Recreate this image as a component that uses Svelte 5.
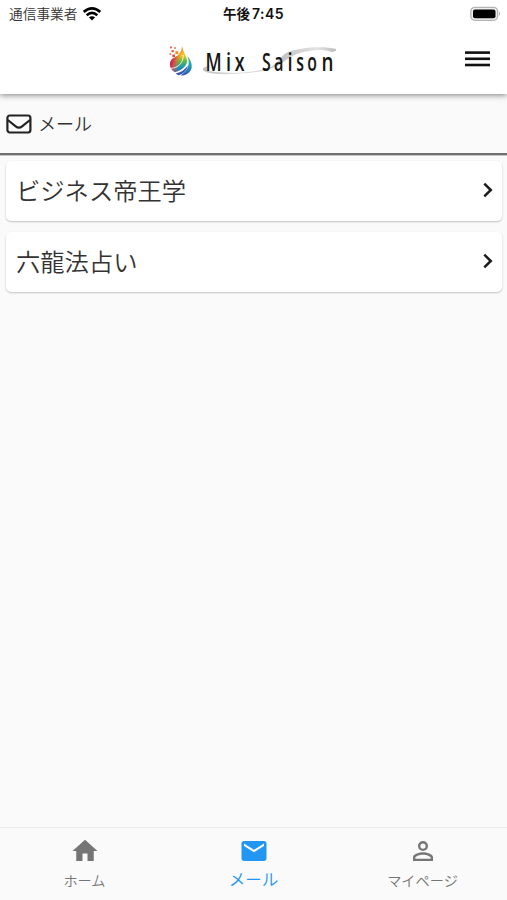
<script>
  const mails = ['ビジネス帝王学', '六龍法占い'];
  const tabs = [
    { id: 'home', label: 'ホーム' },
    { id: 'mail', label: 'メール' },
    { id: 'person', label: 'マイページ' }
  ];
  const active = 'mail';
  // x position, horizontal scale and glyph of each logo letter
  const letters = [
    [205.6, 0.69, 'M'], [225.9, 0.72, 'i'], [234.8, 0.7, 'x'],
    [262, 0.62, 'S'], [274, 0.64, 'a'], [287.4, 0.72, 'i'],
    [296.3, 0.62, 's'], [307.3, 0.62, 'o'], [321.4, 0.74, 'n']
  ];
</script>

<div class="screen">
  <header>
    <div class="status">
      <div class="carrier">
        <span>通信事業者</span>
        <svg width="20" height="14" viewBox="0 0 20 14" fill="none" stroke="#000" stroke-width="2.7">
          <path d="M1.7 4.9Q10-2.1 18.3 4.9" />
          <path d="M4.7 8.2Q10 3.7 15.3 8.2" />
          <path d="M10 13.5 6.9 10.3Q10 8 13.1 10.3Z" fill="#000" stroke="none" />
        </svg>
      </div>
      <span class="time">午後<b>7:45</b></span>
      <svg class="battery" width="31" height="16" viewBox="0 0 31 16">
        <rect x="0.8" y="1.3" width="26.8" height="13" rx="4" fill="#eee" stroke="#b4b4b4" stroke-width="1.3" />
        <rect x="3" y="3.4" width="22.5" height="8.8" rx="2" fill="#000" />
        <path d="M29 5.5Q31 7.8 29 10Z" fill="#aaa" />
      </svg>
    </div>
    <div class="brand">
      <svg class="logo" width="180" height="40" viewBox="162 38 180 40">
        <defs>
          <linearGradient id="flame" x1="179" y1="46" x2="181" y2="74" gradientUnits="userSpaceOnUse">
            <stop offset="0" stop-color="#f58a1f" />
            <stop offset=".3" stop-color="#f6c821" />
            <stop offset=".52" stop-color="#5cb947" />
            <stop offset=".75" stop-color="#158fc4" />
            <stop offset="1" stop-color="#3a3fa0" />
          </linearGradient>
          <linearGradient id="edge" x1="169" y1="60" x2="180" y2="63" gradientUnits="userSpaceOnUse">
            <stop offset="0" stop-color="#b01e86" />
            <stop offset=".35" stop-color="#e5304a" />
            <stop offset="1" stop-color="#f08a20" stop-opacity="0" />
          </linearGradient>
          <linearGradient id="crescent" x1="188" y1="54" x2="182" y2="74" gradientUnits="userSpaceOnUse">
            <stop offset="0" stop-color="#8dc63f" />
            <stop offset=".4" stop-color="#1fa8b8" />
            <stop offset="1" stop-color="#2b4fb0" />
          </linearGradient>
          <linearGradient id="swoosh" x1="200" x2="338" y1="0" y2="0" gradientUnits="userSpaceOnUse">
            <stop offset="0" stop-color="#bbb" />
            <stop offset=".3" stop-color="#e6e6e6" />
            <stop offset=".6" stop-color="#c4c4c4" />
            <stop offset=".85" stop-color="#e2e2e2" />
            <stop offset="1" stop-color="#b8b8b8" />
          </linearGradient>
        </defs>
        <path fill="url(#swoosh)" d="M211 64.5C196 67 202 73.5 226 73.3C250 73 270 70 281 63C291 55 300 49.3 322 49.1Q328 49.5 332 51.3Q338 49.5 335.5 47.8C323 44.5 298 46.5 287 51.5C280 55 279 62 269 67C254 72 226 73 211 70.3Q202 68 211 64.5Z" />
        <path fill="url(#flame)" d="M182 45.2C183 50 185 53 186.3 56.5C189 63 184 68.5 175 71.3C170 68.5 168 62 172.3 57.8C177 55.5 182 52 182 45.2Z" />
        <path fill="url(#edge)" d="M182 45.2C183 50 185 53 186.3 56.5C189 63 184 68.5 175 71.3C170 68.5 168 62 172.3 57.8C177 55.5 182 52 182 45.2Z" />
        <path fill="none" stroke="#fff" stroke-width=".8" d="M171 67.3C178 67 183.5 62 183.2 54" />
        <path fill="url(#crescent)" d="M187.3 55C193 61 194 70 186 73.5Q183 75 180.8 74.3C188 70 190.5 63 187.3 55Z" />
        <path fill="#3554b4" d="M187.8 64.5C187 69.5 183.5 72.5 179 74.2Q176.8 73.8 175.7 72.5Q184 70.5 187.8 64.5Z" />
        <g fill="#ef633c">
          <rect x="170" y="45.5" width="1.9" height="1.9" />
          <rect x="174.2" y="46.2" width="1.6" height="1.6" />
          <rect x="171.5" y="49" width="2.3" height="2.3" />
          <rect x="175.4" y="50.2" width="2.8" height="2.8" fill="#f18a22" />
          <rect x="169.5" y="52.3" width="1.6" height="1.6" />
          <rect x="172.4" y="53.5" width="2.6" height="2.6" fill="#e74545" />
        </g>
        {#each letters as [x, s, ch]}
          <text transform={`translate(${x} 70) scale(${s} 1)`}>{ch}</text>
        {/each}
      </svg>
      <svg class="menu" width="25" height="16" viewBox="0 0 25 16" fill="#111">
        <rect width="25" height="2.6" y=".3" /><rect width="25" height="2.6" y="6.5" /><rect width="25" height="2.6" y="12.7" />
      </svg>
    </div>
  </header>

  <div class="heading">
    <svg width="26" height="20" viewBox="0 0 26 20" fill="none" stroke="#222" stroke-width="2.2" stroke-linejoin="round">
      <rect x="1.4" y="1.5" width="23" height="17" rx="2.4" />
      <path d="M1.8 6 9.7 12.3Q12.9 14.9 16.1 12.3L24 6" />
    </svg>
    <h1>メール</h1>
  </div>

  <main>
    {#each mails as mail}
      <div class="card">
        <span>{mail}</span>
        <svg width="10" height="16" viewBox="0 0 10 16" fill="none" stroke="#1c1c1c" stroke-width="2.5">
          <path d="M1.3 1.7 7.8 8 1.3 14.3" />
        </svg>
      </div>
    {/each}
  </main>

  <nav>
    {#each tabs as tab}
      <div class="tab" class:active={tab.id === active}>
        <svg width="30" height="30" viewBox="0 0 24 24" fill="currentColor">
          {#if tab.id === 'home'}
            <path d="M10 20v-6h4v6h5v-8h3L12 3 2 12h3v8z" />
          {:else if tab.id === 'mail'}
            <path d="M20 4H4c-1.1 0-2 .9-2 2v12c0 1.1.9 2 2 2h16c1.1 0 2-.9 2-2V6c0-1.1-.9-2-2-2zm0 4-8 5-8-5V6l8 5 8-5z" />
          {:else}
            <path d="M12 5.9a2.1 2.1 0 1 1 0 4.2 2.1 2.1 0 0 1 0-4.2m0 9c2.97 0 6.1 1.46 6.1 2.1v1.1H5.9V17c0-.64 3.13-2.1 6.1-2.1M12 4a4 4 0 1 0 0 8 4 4 0 0 0 0-8zm0 9c-2.67 0-8 1.34-8 4v3h16v-3c0-2.66-5.33-4-8-4z" />
          {/if}
        </svg>
        <span>{tab.label}</span>
      </div>
    {/each}
  </nav>
</div>

<style>
  .screen {
    width: 507px;
    height: 900px;
    display: flex;
    flex-direction: column;
    background: #fafafa;
    color: #333;
    font-family: "Noto Sans CJK JP", sans-serif;
    font-weight: 350;
    overflow: hidden;
  }
  header {
    height: 94px;
    flex: none;
    background: #fff;
    box-shadow: 0 1px 6px rgba(0, 0, 0, .5);
  }
  .status {
    height: 27px;
    display: grid;
    grid-template-columns: 1fr auto 1fr;
    align-items: center;
    padding: 0 6px 0 9px;
    box-sizing: border-box;
    font-size: 13.7px;
    line-height: 27px;
  }
  .carrier { display: flex; align-items: center; gap: 5px; }
  .time { color: #111; font-size: 13.5px; font-weight: 700; margin-right: 3px; }
  .time b { font-family: Inter, sans-serif; font-size: 14px; font-weight: 600; letter-spacing: .5px; margin-left: 2px; }
  .battery { justify-self: end; }
  .brand {
    height: 67px;
    display: grid;
    grid-template-columns: 1fr auto 1fr;
    align-items: center;
    padding: 0 17px 0 14px;
  }
  .logo { grid-column: 2; margin-bottom: 4px; }
  .logo text { font: 600 25.5px "Open Sans", sans-serif; fill: #151515; }
  .menu { justify-self: end; margin-bottom: 3px; }
  .heading {
    height: 61px;
    flex: none;
    box-sizing: border-box;
    border-bottom: 2px solid #707070;
    box-shadow: 0 1px 0 #c4c4c4;
    display: flex;
    align-items: center;
    gap: 6px;
    padding: 1px 6px 0;
  }
  h1 { margin: -2px 0 0; font-size: 18px; font-weight: inherit; line-height: 56px; }
  main {
    flex: 1;
    display: flex;
    flex-direction: column;
    gap: 11px;
    padding: 6px 5px 0 6px;
  }
  .card {
    height: 60px;
    box-sizing: border-box;
    display: flex;
    align-items: center;
    justify-content: space-between;
    padding: 0 9px 2px 10px;
    background: #fff;
    border-radius: 5px;
    box-shadow: 0 1px 2px rgba(0, 0, 0, .23);
    font-size: 24.3px;
    line-height: 58px;
  }
  .card span { margin-top: -1px; }
  nav {
    height: 73px;
    flex: none;
    box-sizing: border-box;
    display: flex;
    border-top: 1px solid #ececec;
  }
  .tab {
    flex: 1;
    display: flex;
    flex-direction: column;
    align-items: center;
    padding-top: 8px;
    color: #757575;
    font-size: 14.2px;
    line-height: 28px;
  }
  .tab svg { flex: none; }
  .tab.active { color: #2196f3; font-size: 16.5px; line-height: 26px; }
</style>
